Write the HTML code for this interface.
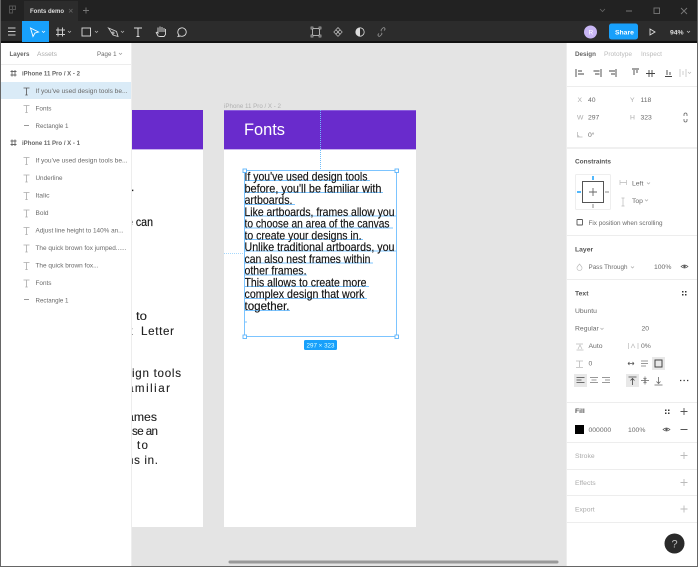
<!DOCTYPE html>
<html><head><meta charset="utf-8"><style>
html,body{margin:0;padding:0;width:698px;height:567px;overflow:hidden;background:#e4e4e4}
svg{display:block;filter:blur(.35px)}
text{font-family:"Liberation Sans",sans-serif;font-size:6.8px;fill:#555}
.l{fill:#6a6a6a}.h{fill:#333}.m{fill:#aaa}
.b{font-size:11.8px;fill:#111;stroke:#111;stroke-width:.15px}
.c{font-size:11.6px;fill:#222;stroke:#222;stroke-width:.12px}
.u{stroke:#7cc4ff;stroke-width:1}
.sep{stroke:#ededed;stroke-width:1}
</style></head><body>
<svg width="698" height="567" viewBox="0 0 698 567" xmlns="http://www.w3.org/2000/svg">
<rect width="698" height="567" fill="#e4e4e4"/>
<!-- title bar -->
<rect width="698" height="21" fill="#222"/>
<rect x="24" y="1" width="54" height="20" fill="#2c2c2c"/>
<text x="30" y="13" style="font-size:6.8px;fill:#ddd;font-weight:bold" textLength="34" lengthAdjust="spacingAndGlyphs">Fonts demo</text>
<path d="M69 9l3.500 3.500M72.500 9L69 12.500" stroke="#666" stroke-width=".8"/>
<path d="M86 7.500v6M83 10.500h6" stroke="#777" stroke-width=".9"/>
<path d="M9.500 6h3v7h-3zM9.500 9.500h6M12.500 6h3v3.500h-3z" fill="none" stroke="#555" stroke-width=".9"/>
<path d="M600 9l2.500 2.500L605 9" fill="none" stroke="#666" stroke-width=".8"/>
<path d="M626 11h6" stroke="#777" stroke-width="1"/>
<rect x="654" y="8" width="5.500" height="5.500" fill="none" stroke="#777" stroke-width=".9"/>
<path d="M681 8l6 6M687 8l-6 6" stroke="#777" stroke-width=".9"/>
<!-- toolbar -->
<rect y="21" width="698" height="21" fill="#2c2c2c"/>
<rect y="41" width="698" height="2" fill="#111"/>
<rect x="22" y="21" width="27" height="21" fill="#18a0fb"/>
<path d="M8 28h7.500M8 31.500h7.500M8 35h7.500" stroke="#ccc" stroke-width=".9"/>
<path d="M30.500 28l8 4-3.500 1-2 3.500z" fill="none" stroke="#fff" stroke-width=".9"/>
<path d="M42 31l1.500 1.500L45 31" fill="none" stroke="#fff" stroke-width=".7"/>
<path d="M58 27.500v9M62.500 27.500v9M56 30h9M56 34.500h9" stroke="#ccc" stroke-width="1"/>
<path d="M68 31l1.500 1.500L71 31M95 31l1.500 1.500L98 31M121 31l1.500 1.500L124 31" fill="none" stroke="#bbb" stroke-width=".7"/>
<rect x="82" y="28" width="8.500" height="8" fill="none" stroke="#ddd" stroke-width=".9"/>
<path d="M108.500 28l8 3.500 1.500 5-5-1.500zM113 32a1 1 0 1 0 .1 0" fill="none" stroke="#ccc" stroke-width=".9"/>
<path d="M134 28h8M138 28v8.500M136.500 36.500h3" fill="none" stroke="#ddd" stroke-width="1"/>
<path d="M156 32l2 4 2 .5h4l1.500-2v-5.500M157 32l1 1v-5.500M160 32v-5.500M162 32v-5M164 32v-4" fill="none" stroke="#ddd" stroke-width=".9"/>
<path d="M178 36.500l1-1.500a4.200 4.200 0 1 1 1.500 1z" fill="none" stroke="#ddd" stroke-width=".9"/>
<rect x="312.500" y="28.500" width="7" height="7" fill="none" stroke="#bbb" stroke-width=".9"/>
<path d="M311 27h2v2h-2zM319 27h2v2h-2zM311 35h2v2h-2zM319 35h2v2h-2z" fill="#2c2c2c" stroke="#bbb" stroke-width=".7"/>
<path d="M338 27.500l2.200 2.200-2.200 2.200-2.200-2.200zM338 32l2.200 2.200-2.200 2.200-2.200-2.200zM333.800 32l2.200-2.200 2.200 2.200-2.200 2.200zM342.200 32l-2.200-2.200-2.200 2.200 2.200 2.200z" fill="none" stroke="#bbb" stroke-width=".7"/>
<circle cx="360" cy="32" r="4.200" fill="#2c2c2c" stroke="#ddd" stroke-width=".8"/>
<path d="M360 27.800a4.200 4.200 0 0 0 0 8.400z" fill="#ddd"/>
<path d="M379 33.500l-.8.800a1.300 1.300 0 0 0 1.800 1.800l1.500-1.500a1.300 1.300 0 0 0 0-1.800M384 30.500l.8-.8a1.300 1.300 0 0 0-1.800-1.800l-1.500 1.500a1.300 1.300 0 0 0 0 1.800" fill="none" stroke="#999" stroke-width=".8"/>
<circle cx="590.500" cy="32" r="6.500" fill="#c8b6f4"/>
<text x="588.500" y="34.500" style="font-size:6.500px;fill:#fff">R</text>
<rect x="609" y="23.500" width="29" height="16" rx="2.500" fill="#18a0fb"/>
<text x="615" y="34.500" style="font-size:6.800px;fill:#fff;font-weight:bold">Share</text>
<path d="M650 29l5 3-5 3z" fill="none" stroke="#ddd" stroke-width=".9"/>
<text x="670" y="34.500" style="font-size:6.800px;fill:#ddd;font-weight:bold">94%</text>
<path d="M687 31l1.500 1.500L690 31" fill="none" stroke="#ccc" stroke-width=".7"/>
<!-- canvas frames -->
<rect x="100" y="110" width="103" height="417" fill="#fff"/>
<rect x="100" y="110" width="103" height="40" fill="#692bcc"/>
<rect x="224" y="110" width="192" height="417" fill="#fff"/>
<rect x="224" y="110" width="192" height="40" fill="#692bcc"/>
<rect x="224" y="110" width="192" height="1" fill="#8a5cdc"/>
<rect x="224" y="149" width="192" height="1" fill="#c9b3ee"/>
<rect x="100" y="149" width="103" height="1" fill="#c9b3ee"/>
<text x="224" y="108" style="font-size:6.500px;fill:#b0b0b0" textLength="57" lengthAdjust="spacingAndGlyphs">iPhone 11 Pro / X - 2</text>
<text x="244" y="135" style="font-size:16.500px;fill:#fff" textLength="41" lengthAdjust="spacingAndGlyphs">Fonts</text>
<path d="M320.500 110v60" stroke="#6fbdfb" stroke-width="1" stroke-dasharray="1 1"/>
<path d="M224 253.500h20" stroke="#a5d8fd" stroke-width="1" stroke-dasharray="1 1"/>
<!-- left frame partial text -->
<text class="b" x="131" y="191">.</text>
<text class="b" x="127" y="226" textLength="26" lengthAdjust="spacingAndGlyphs">e can</text>
<text class="c" x="136" y="320" textLength="11" lengthAdjust="spacingAndGlyphs">to</text>
<text class="c" x="127" y="335">x</text>
<text class="c" x="141" y="335" textLength="33" lengthAdjust="spacing">Letter</text>
<text class="c" x="132" y="377" textLength="49" lengthAdjust="spacing">ign tools</text>
<text class="c" x="127" y="392" textLength="43" lengthAdjust="spacing">amiliar</text>
<text class="c" x="127" y="421" textLength="30" lengthAdjust="spacingAndGlyphs">ames</text>
<text class="c" x="132" y="435" textLength="26" lengthAdjust="spacing">se an</text>
<text class="c" x="137" y="449" textLength="11" lengthAdjust="spacing">to</text>
<text class="c" x="127" y="464" textLength="31" lengthAdjust="spacing">ns in.</text>
<!-- selection underlines -->
<path class="u" d="M244 180.500H370M244 192.500H383M244 204.500H295M244 216H397M244 228H393M244 239.500H363M244 251H397M244 263H373M244 275H307M244 286.500H369M244 298.500H367M244 310.500H290M244 322H247"/>
<!-- main text -->
<g transform="translate(0,-.6)">
<text class="b" x="244.500" y="181" textLength="123" lengthAdjust="spacingAndGlyphs">If you've used design tools</text>
<text class="b" x="244.500" y="193" textLength="137" lengthAdjust="spacingAndGlyphs">before, you'll be familiar with</text>
<text class="b" x="244.500" y="204.500" textLength="48" lengthAdjust="spacingAndGlyphs">artboards.</text>
<text class="b" x="244.500" y="216.500" textLength="150" lengthAdjust="spacingAndGlyphs">Like artboards, frames allow you</text>
<text class="b" x="244.500" y="228" textLength="145" lengthAdjust="spacingAndGlyphs">to choose an area of the canvas</text>
<text class="b" x="244.500" y="240" textLength="117" lengthAdjust="spacingAndGlyphs">to create your designs in.</text>
<text class="b" x="244.500" y="251.500" textLength="150" lengthAdjust="spacingAndGlyphs">Unlike traditional artboards, you</text>
<text class="b" x="244.500" y="263.500" textLength="126" lengthAdjust="spacingAndGlyphs">can also nest frames within</text>
<text class="b" x="244.500" y="275" textLength="62" lengthAdjust="spacingAndGlyphs">other frames.</text>
<text class="b" x="244.500" y="287" textLength="122" lengthAdjust="spacingAndGlyphs">This allows to create more</text>
<text class="b" x="244.500" y="298.500" textLength="120" lengthAdjust="spacingAndGlyphs">complex design that work</text>
<text class="b" x="244.500" y="310.500" textLength="45" lengthAdjust="spacingAndGlyphs">together.</text>
</g>
<!-- selection box -->
<rect x="244.500" y="170.500" width="152" height="166" fill="none" stroke="#7cc4ff" stroke-width="1"/>
<g fill="#fff" stroke="#5cb4fb" stroke-width=".9">
<rect x="243" y="169" width="3.500" height="3.500"/><rect x="395" y="169" width="3.500" height="3.500"/>
<rect x="243" y="335" width="3.500" height="3.500"/><rect x="395" y="335" width="3.500" height="3.500"/>
</g>
<rect x="304" y="340" width="33" height="10" rx="1.500" fill="#18a0fb"/>
<text x="306.500" y="347.500" style="font-size:6px;fill:#dff" textLength="28" lengthAdjust="spacingAndGlyphs">297 × 323</text>
<!-- left panel -->
<rect x="1" y="43" width="130" height="524" fill="#fff"/>
<rect x="131" y="43" width="1" height="524" fill="#ededed"/>
<path class="sep" d="M1 64.500H131"/>
<text class="h" x="9.500" y="56" style="font-weight:bold;fill:#666" textLength="20" lengthAdjust="spacingAndGlyphs">Layers</text>
<text class="m" x="37" y="56" textLength="20" lengthAdjust="spacingAndGlyphs">Assets</text>
<text class="l" x="97" y="56" textLength="19.500" lengthAdjust="spacingAndGlyphs">Page 1</text>
<path d="M119 53l1.500 1.500 1.500-1.500" fill="none" stroke="#999" stroke-width=".7"/>
<rect x="1" y="82" width="130" height="17" fill="#daebf7"/>
<!-- frame icons -->
<path d="M12 70v6.500M15 70v6.500M10.500 71.500h6M10.500 75h6M12 139.500v6.500M15 139.500v6.500M10.500 141h6M10.500 144.500h6" stroke="#666" stroke-width=".9"/>
<text x="22" y="75.500" style="fill:#666;font-weight:bold" textLength="58" lengthAdjust="spacingAndGlyphs">iPhone 11 Pro / X - 2</text>
<text x="22" y="145" style="fill:#666;font-weight:bold" textLength="58" lengthAdjust="spacingAndGlyphs">iPhone 11 Pro / X - 1</text>
<text class="l" x="35.500" y="93" textLength="92" lengthAdjust="spacingAndGlyphs">If you've used design tools be...</text>
<text class="l" x="35.500" y="110.500" textLength="16" lengthAdjust="spacingAndGlyphs">Fonts</text>
<text class="l" x="35.500" y="128" textLength="33" lengthAdjust="spacingAndGlyphs">Rectangle 1</text>
<text class="l" x="35.500" y="162.500" textLength="92" lengthAdjust="spacingAndGlyphs">If you've used design tools be...</text>
<text class="l" x="35.500" y="180" textLength="27" lengthAdjust="spacingAndGlyphs">Underline</text>
<text class="l" x="35.500" y="197.500" textLength="14" lengthAdjust="spacingAndGlyphs">Italic</text>
<text class="l" x="35.500" y="215" textLength="13" lengthAdjust="spacingAndGlyphs">Bold</text>
<text class="l" x="35.500" y="232.500" textLength="88" lengthAdjust="spacingAndGlyphs">Adjust line height to 140% an...</text>
<text class="l" x="35.500" y="250" textLength="91" lengthAdjust="spacingAndGlyphs">The quick brown fox jumped......</text>
<text class="l" x="35.500" y="267.500" textLength="63" lengthAdjust="spacingAndGlyphs">The quick brown fox...</text>
<text class="l" x="35.500" y="285" textLength="16" lengthAdjust="spacingAndGlyphs">Fonts</text>
<text class="l" x="35.500" y="302.500" textLength="33" lengthAdjust="spacingAndGlyphs">Rectangle 1</text>
<!-- T icons -->
<path d="M23.500 88h6M26.500 88v7M25.300 95h2.400" fill="none" stroke="#555" stroke-width=".8"/>
<path d="M23.500 105.500h6M26.500 105.500v7M25.300 112.500h2.400M23.500 157.500h6M26.500 157.500v7M25.300 164.500h2.400M23.500 175h6M26.500 175v7M25.300 182h2.400M23.500 192.500h6M26.500 192.500v7M25.300 199.500h2.400M23.500 210h6M26.500 210v7M25.300 217h2.400M23.500 227.500h6M26.500 227.500v7M25.300 234.500h2.400M23.500 245h6M26.500 245v7M25.300 252h2.400M23.500 262.500h6M26.500 262.500v7M25.300 269.500h2.400M23.500 280h6M26.500 280v7M25.300 287h2.400" fill="none" stroke="#aaa" stroke-width=".8"/>
<path d="M24 125.500h5M24 299.500h5" stroke="#999" stroke-width="1"/>
<!-- right panel -->
<rect x="566" y="43" width="131" height="524" fill="#fff"/>
<rect x="566" y="43" width="1" height="524" fill="#ededed"/>
<text x="575" y="56" style="font-weight:bold;fill:#666" textLength="21" lengthAdjust="spacingAndGlyphs">Design</text>
<text x="604" y="56" style="fill:#bbb" textLength="28" lengthAdjust="spacingAndGlyphs">Prototype</text>
<text x="641" y="56" style="fill:#bbb" textLength="21" lengthAdjust="spacingAndGlyphs">Inspect</text>
<path d="M576 69v8M578 71h4M578 74h6M601 69v8M593.500 71h6M595 74h4.500M616 69v8M609 71h6M611 74h4M632 69h7M634 70v5M637 70v3M649 70v7M652 70v7M646 73.500h9M667 75v-5M670 75v-3M665 76.500h7" fill="none" stroke="#444" stroke-width=".9"/>
<path d="M680 69v8M686 69v8M683 71v4M688 72l1.500 1.500L691 72" fill="none" stroke="#bbb" stroke-width=".7"/>
<path class="sep" d="M567 86.500H697"/>
<path d="M567 148H697" stroke="#f0f0f0" stroke-width="2"/>
<text class="m" x="577.500" y="102">X</text><text x="588" y="102" class="l">40</text>
<text class="m" x="630" y="102">Y</text><text x="640.500" y="102" class="l">118</text>
<text class="m" x="577" y="119.500">W</text><text x="588" y="119.500" class="l">297</text>
<text class="m" x="630" y="119.500">H</text><text x="640.500" y="119.500" class="l">323</text>
<path d="M684 116v-1.500a1.500 1.500 0 0 1 3 0v1.500M684 119v1.500a1.500 1.500 0 0 0 3 0v-1.500" fill="none" stroke="#666" stroke-width=".8"/>
<path d="M577.500 132v5h5M577.500 135l2 2" fill="none" stroke="#bbb" stroke-width=".8"/>
<text x="588" y="137" class="l">0°</text>
<text x="575" y="163.500" style="fill:#555;font-weight:bold" textLength="36" lengthAdjust="spacingAndGlyphs">Constraints</text>
<rect x="575.500" y="174.500" width="35" height="35" rx="1" fill="#fff" stroke="#eee"/>
<rect x="582.500" y="181.500" width="21" height="21" fill="none" stroke="#555" stroke-width="1"/>
<path d="M593 188v8M589 192h8" stroke="#666" stroke-width=".9"/>
<path d="M593 176v4M577 192h4" stroke="#18a0fb" stroke-width="1.500"/>
<path d="M605 192h4M593 204v4" stroke="#888" stroke-width="1"/>
<path d="M620 180v5M626.500 180v5M620 182.500h6.500" fill="none" stroke="#bbb" stroke-width=".7"/>
<text x="632" y="185.500" class="l">Left</text>
<path d="M647 182.500l1.500 1.500 1.500-1.500M645 199.500l1.500 1.500 1.500-1.500" fill="none" stroke="#aaa" stroke-width=".7"/>
<path d="M621.500 198h3M623 198v8M621.500 206h3" fill="none" stroke="#bbb" stroke-width=".7"/>
<text x="632" y="203" class="l">Top</text>
<rect x="577" y="219.500" width="5.500" height="5.500" rx=".5" fill="none" stroke="#555" stroke-width=".9"/>
<text x="588.500" y="225" class="l" textLength="74" lengthAdjust="spacingAndGlyphs">Fix position when scrolling</text>
<path class="sep" d="M567 235.500H697"/>
<text x="575" y="251.500" style="fill:#555;font-weight:bold">Layer</text>
<path d="M579.500 264l2 2.500a2.500 2.500 0 1 1-4 0z" fill="none" stroke="#bbb" stroke-width=".7"/>
<text x="588.500" y="269" class="l" textLength="39" lengthAdjust="spacingAndGlyphs">Pass Through</text>
<path d="M631 266.500l1.500 1.500 1.500-1.500" fill="none" stroke="#aaa" stroke-width=".7"/>
<text x="654" y="269" class="l">100%</text>
<path d="M681 266.500q3.500-3 7 0q-3.500 3-7 0z" fill="#fff" stroke="#555" stroke-width=".7"/>
<circle cx="684.500" cy="266.500" r="1.200" fill="#555"/>
<path class="sep" d="M567 279.500H697"/>
<text x="575" y="295.500" style="fill:#555;font-weight:bold">Text</text>
<path d="M682 291h1.500v1.500H682zM685 291h1.500v1.500H685zM682 294h1.500v1.500H682zM685 294h1.500v1.500H685z" fill="#333"/>
<text x="575" y="313" class="l">Ubuntu</text>
<text x="575" y="330.500" class="l">Regular</text>
<path d="M600.500 328l1.500 1.500 1.500-1.500" fill="none" stroke="#aaa" stroke-width=".7"/>
<text x="641.500" y="330.500" class="l">20</text>
<path d="M576 344h7M576.500 350h7M578 349l2-4 2 4" fill="none" stroke="#bbb" stroke-width=".7"/>
<text x="588.500" y="348" class="l">Auto</text>
<path d="M628.500 343v6M638 343v6M631 348l2-4 2 4" fill="none" stroke="#bbb" stroke-width=".7"/>
<text x="641" y="348" class="l">0%</text>
<path d="M576 361h7M576 367.500h7M579.500 361v6" fill="none" stroke="#bbb" stroke-width=".8"/>
<text x="588.500" y="365.500" class="l">0</text>
<path d="M628 363.500h6M628 363.500l1.500-1.500M628 363.500l1.500 1.500M634 363.500l-1.500-1.500M634 363.500l-1.500 1.500" fill="none" stroke="#555" stroke-width=".8"/>
<path d="M641 361h7M641 363.500h7M641 366h5" stroke="#777" stroke-width=".8"/>
<rect x="652" y="357" width="13" height="13" fill="#e8e8e8"/>
<rect x="655" y="360" width="7" height="7" fill="none" stroke="#444" stroke-width="1"/>
<rect x="574" y="374" width="13" height="13" fill="#e8e8e8"/>
<path d="M576.500 377.500h8M576.500 380h5M576.500 382.500h8" stroke="#444" stroke-width=".8"/>
<path d="M590 377.500h8M591.500 380h5M590 382.500h8M602 377.500h8M605 380h5M602 382.500h8" stroke="#777" stroke-width=".8"/>
<rect x="626" y="374" width="13" height="13" fill="#e8e8e8"/>
<path d="M628.500 377h8M632.500 379v6M630.500 380.500l2-2 2 2" fill="none" stroke="#444" stroke-width=".8"/>
<path d="M641 380.500h8M645 376.500v8M643.500 378l1.500 1.500 1.500-1.500M643.500 383l1.500-1.500 1.500 1.500" fill="none" stroke="#666" stroke-width=".7"/>
<path d="M654.500 385h8M658.500 377v6M656.500 381.500l2 2 2-2" fill="none" stroke="#666" stroke-width=".8"/>
<path d="M680 380.500h1.300M683.500 380.500h1.300M687 380.500h1.300" stroke="#333" stroke-width="1.200"/>
<path class="sep" d="M567 402.500H697"/>
<text x="575" y="413" style="fill:#555;font-weight:bold">Fill</text>
<path d="M665 409.500h1.500v1.500H665zM668 409.500h1.500v1.500H668zM665 412.500h1.500v1.500H665zM668 412.500h1.500v1.500H668z" fill="#333"/>
<path d="M684 408v7M680.500 411.500h7" stroke="#555" stroke-width=".9"/>
<rect x="575" y="425" width="9" height="9" fill="#000"/>
<text x="588.500" y="432" class="l">000000</text>
<text x="628" y="432" class="l">100%</text>
<path d="M663 429.500q3.500-3 7 0q-3.500 3-7 0z" fill="#fff" stroke="#555" stroke-width=".7"/>
<circle cx="666.500" cy="429.500" r="1.200" fill="#555"/>
<path d="M680.500 429.500h7" stroke="#555" stroke-width="1"/>
<path class="sep" d="M567 442.500H697M567 469.500H697M567 495.500H697M567 522.500H697"/>
<text class="m" x="575" y="458">Stroke</text>
<text class="m" x="575" y="485">Effects</text>
<text class="m" x="575" y="511.500">Export</text>
<path d="M684 452v7M680.500 455.500h7M684 479v7M680.500 482.500h7M684 505.500v7M680.500 509h7" stroke="#bbb" stroke-width=".9"/>
<circle cx="674.500" cy="543.500" r="10" fill="#2a2a2a"/>
<text x="671.500" y="547.500" style="font-size:11px;fill:#bbb">?</text>
<!-- scrollbar -->
<rect x="228.500" y="560.500" width="330" height="3" rx="1.500" fill="#999"/>
<!-- window border -->
<rect x="0" y="0" width="1" height="567" fill="#666"/>
<rect x="697" y="0" width="1" height="567" fill="#666"/>
<rect x="0" y="566" width="698" height="1" fill="#666"/>
</svg>
</body></html>
